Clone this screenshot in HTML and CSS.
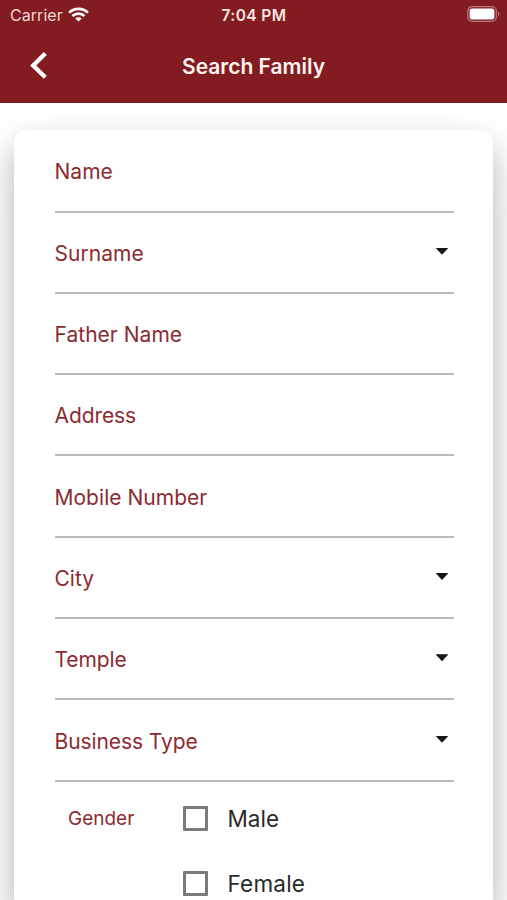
FILE: index.html
```html
<!DOCTYPE html>
<html lang="en">
<head>
<meta charset="utf-8">
<title>Search Family</title>
<link rel="stylesheet" href="styles.css">
</head>
<body>
<header class="header">
  <div class="status">
    <div class="carrier">Carrier
      <svg class="wifi" width="21" height="15" viewBox="0 0 21 15" fill="none" stroke="#fff" stroke-width="2.7"><path d="M1.1 5.6C6.4.5 14.6.5 19.900 5.600"/><path d="M4.500 9.100C7.900 5.900 13.100 5.900 16.500 9.100"/><path d="M10.500 14.600 7.200 11.400C9.100 9.700 11.900 9.700 13.800 11.400Z" fill="#fff" stroke="none"/></svg>
    </div>
    <div class="time">7:04 PM</div>
    <svg class="battery" width="33" height="16" viewBox="0 0 33 16"><rect x=".7" y=".7" width="28.600" height="14.600" rx="4.300" fill="none" stroke="#b8777b" stroke-width="1.200"/><rect x="2.600" y="2.600" width="24.800" height="10.800" rx="2.600" fill="#fff"/><path d="M31 5.500c1.800.8 1.800 4.200 0 5z" fill="#b8777b"/></svg>
  </div>
  <div class="nav">
    <svg class="back" width="20" height="30" viewBox="0 0 20 30" fill="none" stroke="#fff" stroke-width="4.300"><path d="M16.300 3.500 4.200 15.500 16.300 27.300"/></svg>
    <h1 class="title">Search Family</h1>
  </div>
</header>
<main class="page">
  <section class="card">
    <div class="field"><span class="label">Name</span></div>
    <div class="field"><span class="label">Surname</span><i class="caret"></i></div>
    <div class="field"><span class="label">Father Name</span></div>
    <div class="field"><span class="label tight">Address</span></div>
    <div class="field"><span class="label">Mobile Number</span></div>
    <div class="field"><span class="label">City</span><i class="caret"></i></div>
    <div class="field"><span class="label tight">Temple</span><i class="caret"></i></div>
    <div class="field"><span class="label tight">Business Type</span><i class="caret"></i></div>
    <div class="gender">
      <span class="gender-label">Gender</span>
      <div class="options">
        <div class="option"><span class="box"></span><span>Male</span></div>
        <div class="option"><span class="box"></span><span class="female">Female</span></div>
      </div>
    </div>
  </section>
</main>
</body>
</html>
```
FILE: styles.css
```css
* { box-sizing: border-box; }
body {
  margin: 0;
  height: 900px;
  overflow: hidden;
  background: #fff;
  font-family: Inter, "Liberation Sans", sans-serif;
}
.header {
  height: 103px;
  background: #821c21;
  color: #fff;
}
.status {
  height: 30px;
  padding: 0 7px 0 10px;
  display: grid;
  grid-template-columns: 1fr auto 1fr;
  align-items: center;
  font-size: 16px;
}
.carrier {
  display: flex;
  align-items: center;
  gap: 5px;
  color: #f0d5d3;
  letter-spacing: 0.05px;
}
.wifi { margin-top: -2px; }
.time {
  margin-left: -2px;
  font-weight: 600;
  font-size: 15.5px;
  letter-spacing: 0.4px;
  color: #f9e6e2;
}
.battery { justify-self: end; margin-top: -2px; }
.nav {
  height: 73px;
  padding: 0 29px;
  display: grid;
  grid-template-columns: 1fr auto 1fr;
  align-items: center;
}
.back { margin-top: -3px; }
.title {
  margin: 0;
  font-size: 21px;
  font-weight: 600;
  color: #fff4ef;
}
.page {
  height: 797px;
  padding: 27px 14px 0;
  overflow: hidden;
}
.card {
  height: 770px;
  padding: 0 39.500px 0 40.500px;
  border-radius: 13px 13px 0 0;
  background: #fff;
  box-shadow: 0 16px 34px rgba(0, 0, 0, 0.3), 0 60px 34px rgba(0, 0, 0, 0.02);
}
.field {
  height: 81.33px;
  padding-right: 5px;
  display: flex;
  align-items: center;
  justify-content: space-between;
  border-bottom: 2px solid #bababa;
}
.field:first-child { height: 82.5px; }
.label {
  padding-top: 3px;
  color: #8b2b31;
  font-size: 21px;
  line-height: 26px;
  letter-spacing: 0.03px;
}
.tight { letter-spacing: -0.08px; }
.caret {
  width: 13px;
  height: 7px;
  margin-top: -2px;
  background: #171717;
  clip-path: polygon(0 0, 100% 0, 50% 100%);
}
.gender { display: flex; }
.gender-label {
  width: 128px;
  padding: 24px 0 0 13.5px;
  color: #8b2b31;
  font-size: 19px;
  line-height: 26px;
}
.options { padding-top: 4px; }
.option {
  height: 65px;
  display: flex;
  align-items: center;
  gap: 20px;
  color: #292929;
  font-size: 22.5px;
}
.female { letter-spacing: 0.2px; }
.box {
  width: 25px;
  height: 25px;
  border: 3px solid #7b7b7b;
  border-radius: 1px;
}
```
